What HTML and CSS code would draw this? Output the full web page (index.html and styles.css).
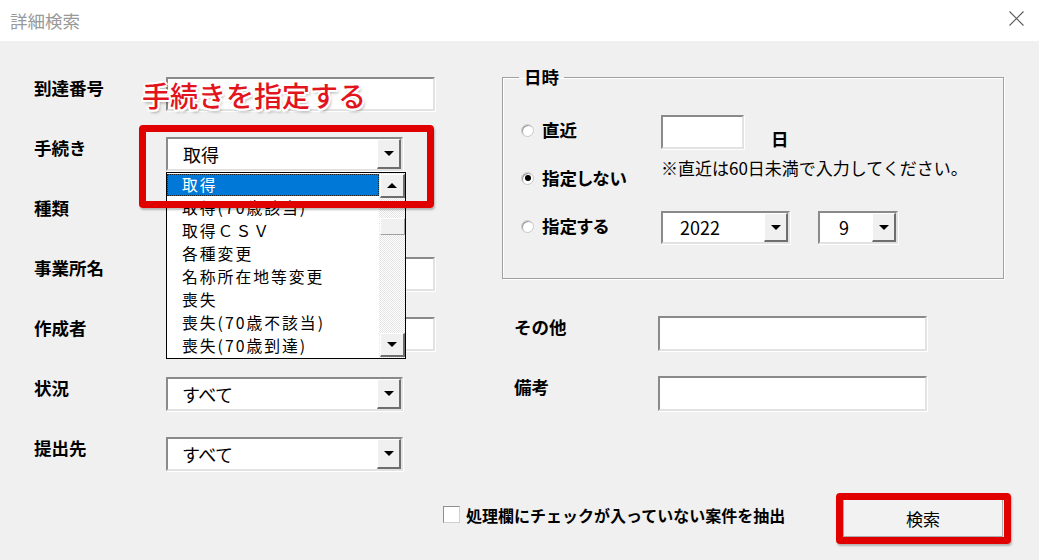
FILE: index.html
```html
<!DOCTYPE html>
<html lang="ja">
<head>
<meta charset="utf-8">
<title>詳細検索</title>
<link rel="stylesheet" href="styles.css">
</head>
<body>
<div class="window">
  <header class="titlebar">
    <span class="title">詳細検索</span>
    <span class="close">
      <svg width="15" height="15" viewBox="0 0 15 15"><path d="M0.5 0.5 L14.5 14.5 M14.5 0.5 L0.5 14.5" stroke="#5a5a5a" stroke-width="1.1" fill="none"/></svg>
    </span>
  </header>

  <main class="content">
    <div class="top">
      <div class="left">
        <div class="lbl">到達番号</div><div class="sunken w-wide"></div>
        <div class="lbl">手続き</div>
        <div class="sunken combo w-combo"><span class="val">取得</span><span class="dbtn"><i class="arrow-down"></i></span></div>
        <div class="lbl">種類</div>
        <div class="sunken combo w-combo"><span class="val"></span><span class="dbtn"><i class="arrow-down"></i></span></div>
        <div class="lbl">事業所名</div><div class="sunken w-wide"></div>
        <div class="lbl">作成者</div><div class="sunken w-wide"></div>
        <div class="lbl">状況</div>
        <div class="sunken combo w-combo"><span class="val kana">すべて</span><span class="dbtn"><i class="arrow-down"></i></span></div>
        <div class="lbl">提出先</div>
        <div class="sunken combo w-combo"><span class="val kana">すべて</span><span class="dbtn"><i class="arrow-down"></i></span></div>
      </div>

      <div class="right">
        <fieldset class="group">
          <legend class="legend">日時</legend>
          <div class="group-inner">
            <div class="radios">
              <div class="radio-row"><span class="radio"></span><span class="rlbl">直近</span></div>
              <div class="radio-row"><span class="radio checked"></span><span class="rlbl kana">指定しない</span></div>
              <div class="radio-row"><span class="radio"></span><span class="rlbl kana">指定する</span></div>
            </div>
            <div class="datefields">
              <div class="days-row">
                <div class="sunken days"></div>
                <span class="day-unit">日</span>
              </div>
              <div class="note">※直近は60日未満で入力してください。</div>
              <div class="ym-row">
                <div class="sunken combo w-year"><span class="val">2022</span><span class="dbtn"><i class="arrow-down"></i></span></div>
                <div class="sunken combo w-month"><span class="val">9</span><span class="dbtn"><i class="arrow-down"></i></span></div>
              </div>
            </div>
          </div>
        </fieldset>

        <div class="extra">
          <div class="lbl">その他</div><div class="sunken w-wide"></div>
          <div class="lbl">備考</div><div class="sunken w-wide"></div>
        </div>
      </div>
    </div>

    <div class="bottom">
      <label class="check"><span class="cbox"></span><span class="clbl">処理欄にチェックが入っていない案件を抽出</span></label>
      <button class="search" type="button">検索</button>
    </div>
  </main>

  <div class="dropdown">
    <ul class="list">
      <li class="item selected">取得</li>
      <li class="item">取得(70歳該当)</li>
      <li class="item">取得ＣＳＶ</li>
      <li class="item">各種変更</li>
      <li class="item">名称所在地等変更</li>
      <li class="item">喪失</li>
      <li class="item">喪失(70歳不該当)</li>
      <li class="item">喪失(70歳到達)</li>
    </ul>
    <div class="scrollbar">
      <span class="sbtn"><i class="arrow-up"></i></span>
      <div class="track"><span class="thumb"></span></div>
      <span class="sbtn"><i class="arrow-down"></i></span>
    </div>
  </div>

  <div class="annotation">手続きを指定する</div>
  <div class="redbox redbox-combo"></div>
  <div class="redbox redbox-search"></div>
</div>
</body>
</html>
```

FILE: styles.css
```css
* { box-sizing: border-box; }

html, body {
  margin: 0;
  padding: 0;
  background: #f0f0f0;
}

.window {
  position: relative;
  width: 1039px;
  height: 560px;
  overflow: hidden;
  background: #f0f0f0;
  font-family: "Noto Sans CJK JP", "Noto Sans", sans-serif;
  color: #000;
}

/* Title bar */
.titlebar {
  height: 41px;
  background: #fff;
  display: flex;
  align-items: center;
  justify-content: space-between;
  padding: 0 15px 0 10px;
}
.title {
  font-size: 17.5px;
  color: #999;
  line-height: 20px;
}
.close {
  display: flex;
  margin-top: -5px;
}

/* Content */
.content {
  display: flex;
  flex-direction: column;
}
.top {
  display: flex;
  align-items: flex-start;
}

.lbl {
  font-size: 17.5px;
  font-weight: bold;
  line-height: 22px;
  align-self: start;
}

.left {
  padding-top: 36px;
  padding-left: 34px;
  display: grid;
  grid-template-columns: 132px 269px;
  grid-auto-rows: 34px;
  row-gap: 26px;
}

/* Sunken 3D field */
.sunken {
  background: #fff;
  border-top: 2px solid #8a8a8a;
  border-left: 2px solid #8a8a8a;
  border-right: 2px solid #e2e2e2;
  border-bottom: 2px solid #e2e2e2;
  box-shadow: 1px 1px 0 #fff;
  height: 34px;
}
.w-wide { width: 269px; }
.w-combo { width: 237px; }
.w-year { width: 129px; height: 33px; }
.w-month { width: 80px; height: 33px; }

.combo {
  display: flex;
  align-items: stretch;
}
.combo .val {
  flex: 1;
  padding-left: 15px;
  font-size: 18px;
  line-height: 30px;
}
.combo .val.kana { font-feature-settings: "palt"; }
.w-year .val, .w-month .val { padding-left: 17px; line-height: 29px; }
.w-month .val { padding-left: 19px; }

.dbtn {
  width: 24px;
  background: #f0f0f0;
  border-top: 1px solid #fff;
  border-left: 1px solid #fff;
  border-right: 2px solid #6e6e6e;
  border-bottom: 2px solid #6e6e6e;
  display: flex;
  align-items: center;
  justify-content: center;
}
.arrow-down {
  display: block;
  width: 0;
  height: 0;
  border-left: 5px solid transparent;
  border-right: 5px solid transparent;
  border-top: 5px solid #000;
}
.arrow-up {
  display: block;
  width: 0;
  height: 0;
  border-left: 5px solid transparent;
  border-right: 5px solid transparent;
  border-bottom: 5px solid #000;
}

/* Right column */
.right {
  margin-left: 67px;
  padding-top: 26px;
  display: flex;
  flex-direction: column;
}

.group {
  width: 502px;
  margin: 0;
  padding: 0 0 34px 16px;
  min-width: 0;
  border: 1px solid #a0a0a0;
  box-shadow: inset 1px 1px 0 #fff, 1px 1px 0 #fff;
}
.legend {
  padding: 0 5px;
  font-size: 17.5px;
  font-weight: bold;
  line-height: 20px;
}
.group-inner {
  display: flex;
}
.radios {
  width: 142px;
  padding-top: 32px;
  padding-left: 2px;
  display: flex;
  flex-direction: column;
  gap: 26px;
}
.radio-row {
  display: flex;
  align-items: center;
  gap: 8px;
  height: 22px;
}
.radio {
  width: 13px;
  height: 13px;
  border-radius: 50%;
  background: #fff;
  border: 1px solid #c8c8c8;
  box-shadow: inset 1px 1px 0 #9a9a9a;
  display: flex;
  align-items: center;
  justify-content: center;
}
.radio.checked::after {
  content: "";
  width: 6px;
  height: 6px;
  border-radius: 50%;
  background: #000;
}
.rlbl {
  font-size: 17.5px;
  font-weight: bold;
  line-height: 22px;
}
.kana { font-feature-settings: "palt"; }

.datefields {
  padding-top: 28px;
  display: flex;
  flex-direction: column;
}
.days-row {
  display: flex;
  align-items: flex-end;
  gap: 27px;
}
.days { width: 83px; }
.day-unit {
  font-size: 17.5px;
  font-weight: bold;
  line-height: 22px;
  margin-bottom: -1px;
}
.note {
  margin-top: 8px;
  font-size: 17px;
  line-height: 22px;
}
.ym-row {
  margin-top: 32px;
  display: flex;
  gap: 28px;
}

.extra {
  margin-top: 37px;
  padding-left: 12px;
  display: grid;
  grid-template-columns: 144px 269px;
  grid-auto-rows: 35px;
  row-gap: 25px;
}
.extra .sunken { height: 35px; }

/* Bottom row */
.bottom {
  margin-top: 28px;
  padding-left: 443px;
  padding-right: 36px;
  display: flex;
  align-items: center;
}
.check {
  display: flex;
  align-items: center;
  gap: 6px;
  margin-top: -7px;
}
.cbox {
  width: 17px;
  height: 17px;
  background: #fff;
  border: 1px solid #8f8f8f;
  border-right-color: #d0d0d0;
  border-bottom-color: #d0d0d0;
}
.clbl {
  font-size: 16px;
  font-weight: bold;
  line-height: 22px;
}
.search {
  margin-left: auto;
  width: 160px;
  height: 38px;
  background: #f2f2f2;
  border: 1px solid #adadad;
  font-family: inherit;
  font-size: 17px;
  color: #000;
  padding: 0;
}

/* Opened dropdown list (overlay) */
.dropdown {
  position: absolute;
  left: 166px;
  top: 172px;
  width: 240px;
  height: 187px;
  border: 1px solid #000;
  background: #fff;
  display: flex;
}
.list {
  list-style: none;
  margin: 0;
  padding: 0;
  flex: 1;
}
.item {
  height: 23px;
  line-height: 23px;
  padding-left: 15px;
  font-size: 15.8px;
  letter-spacing: 2px;
  white-space: nowrap;
}
.item.selected {
  background: #0078d7;
  color: #fff;
  outline: 1px dotted #222;
  outline-offset: -1px;
  margin-top: 1px;
  height: 22px;
  line-height: 22px;
}
.scrollbar {
  width: 26px;
  display: flex;
  flex-direction: column;
  padding: 1px 0 1px 1px;
  background: repeating-conic-gradient(#ffffff 0 25%, #e4e4e4 0 50%) 0 0 / 2px 2px;
}
.sbtn, .thumb {
  height: 24px;
  background: #f0f0f0;
  border-top: 1px solid #fff;
  border-left: 1px solid #fff;
  border-right: 2px solid #6e6e6e;
  border-bottom: 2px solid #6e6e6e;
  display: flex;
  align-items: center;
  justify-content: center;
}
.track {
  flex: 1;
  padding-top: 20px;
  display: flex;
  flex-direction: column;
}
.thumb {
  height: 17px;
  border-right-color: #a0a0a0;
  border-bottom-color: #a0a0a0;
  border-right-width: 1px;
  border-bottom-width: 1px;
}

/* Annotation overlays */
.annotation {
  position: absolute;
  left: 142px;
  top: 79px;
  font-size: 28px;
  line-height: 32px;
  font-weight: 500;
  color: #e2141c;
  white-space: nowrap;
  text-shadow:
    -2px 0 0 #fff, 2px 0 0 #fff, 0 -2px 0 #fff, 0 2px 0 #fff,
    -1.5px -1.5px 0 #fff, 1.5px -1.5px 0 #fff, -1.5px 1.5px 0 #fff, 1.5px 1.5px 0 #fff,
    2px 3px 3px rgba(0, 0, 0, 0.35);
}
.redbox {
  position: absolute;
  border: 7px solid #e00000;
  border-radius: 4px;
  box-shadow: 1px 2px 2px rgba(0, 0, 0, 0.25);
}
.redbox-combo {
  left: 139px;
  top: 125px;
  width: 295px;
  height: 83px;
}
.redbox-search {
  left: 836px;
  top: 493px;
  width: 175px;
  height: 51px;
}
```
